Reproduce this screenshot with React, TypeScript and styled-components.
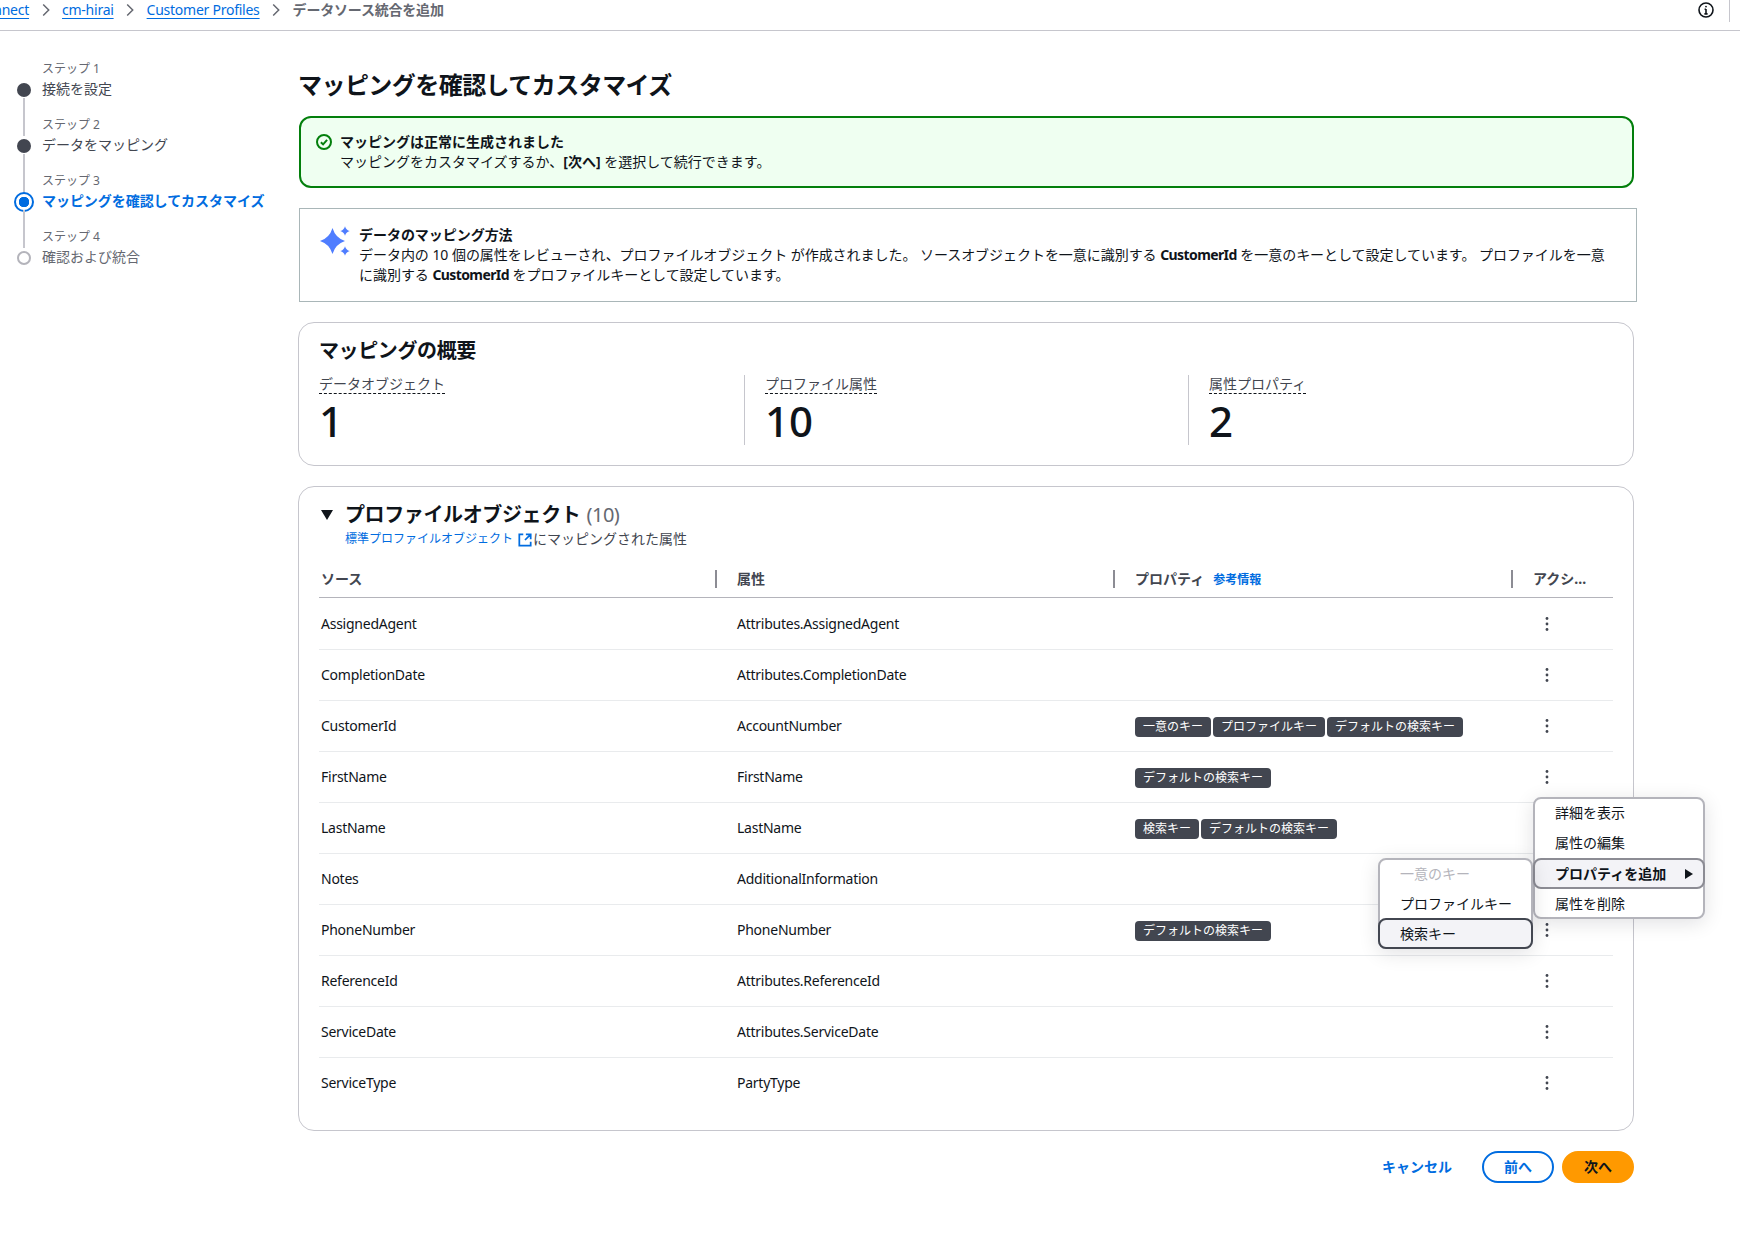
import React from "react";
import styled, { createGlobalStyle } from "styled-components";

const GlobalStyle = createGlobalStyle`
  html, body {
    margin: 0;
    padding: 0;
    background: #ffffff;
    overflow: hidden;
  }
  body {
    font-family: "Noto Sans", "Noto Sans CJK JP", sans-serif;
    font-size: 14px;
    line-height: 20px;
    color: #0f141a;
  }
  * {
    box-sizing: border-box;
  }
  a {
    text-decoration: none;
  }
`;

type Row = {
  source: string;
  attribute: string;
  props: string[];
};

const rows: Row[] = [
  { source: "AssignedAgent", attribute: "Attributes.AssignedAgent", props: [] },
  { source: "CompletionDate", attribute: "Attributes.CompletionDate", props: [] },
  {
    source: "CustomerId",
    attribute: "AccountNumber",
    props: ["一意のキー", "プロファイルキー", "デフォルトの検索キー"],
  },
  { source: "FirstName", attribute: "FirstName", props: ["デフォルトの検索キー"] },
  { source: "LastName", attribute: "LastName", props: ["検索キー", "デフォルトの検索キー"] },
  { source: "Notes", attribute: "AdditionalInformation", props: [] },
  { source: "PhoneNumber", attribute: "PhoneNumber", props: ["デフォルトの検索キー"] },
  { source: "ReferenceId", attribute: "Attributes.ReferenceId", props: [] },
  { source: "ServiceDate", attribute: "Attributes.ServiceDate", props: [] },
  { source: "ServiceType", attribute: "PartyType", props: [] },
];

type StepState = "done" | "active" | "pending";

const steps: { label: string; title: string; state: StepState }[] = [
  { label: "ステップ 1", title: "接続を設定", state: "done" },
  { label: "ステップ 2", title: "データをマッピング", state: "done" },
  { label: "ステップ 3", title: "マッピングを確認してカスタマイズ", state: "active" },
  { label: "ステップ 4", title: "確認および統合", state: "pending" },
];

const stats = [
  { label: "データオブジェクト", value: "1" },
  { label: "プロファイル属性", value: "10" },
  { label: "属性プロパティ", value: "2" },
];

function Kebab() {
  return (
    <svg width="16" height="16" viewBox="0 0 16 16" fill="#424650">
      <circle cx="8" cy="2.5" r="1.4" />
      <circle cx="8" cy="8" r="1.4" />
      <circle cx="8" cy="13.5" r="1.4" />
    </svg>
  );
}

function Chevron() {
  return (
    <svg width="8" height="14" viewBox="0 0 8 14" fill="none" stroke="#656871" strokeWidth="1.5">
      <path d="M1.2 1.5 6.7 7l-5.5 5.5" />
    </svg>
  );
}

function App() {
  return (
    <>
      <GlobalStyle />
      <TopBar>
        <Breadcrumbs>
          <FirstCrumb href="#">Connect</FirstCrumb>
          <Chevron />
          <Crumb href="#">cm-hirai</Crumb>
          <Chevron />
          <Crumb href="#">Customer Profiles</Crumb>
          <Chevron />
          <CurrentCrumb>データソース統合を追加</CurrentCrumb>
        </Breadcrumbs>
        <TopTools>
          <svg width="16" height="16" viewBox="0 0 16 16" fill="none" stroke="#0f141a" strokeWidth="1.6">
            <circle cx="8" cy="8" r="7" />
            <path d="M8 7v5M6.6 7.2H8M6.4 11.9h3.2" />
            <circle cx="8" cy="4.6" r="0.9" fill="#0f141a" stroke="none" />
          </svg>
          <ToolDivider />
        </TopTools>
      </TopBar>
      <Page>
        <Sidebar>
          {steps.map((step, i) => (
            <React.Fragment key={step.label}>
              <StepLabelRow>
                <ConnectorCell>{i > 0 && <Connector />}</ConnectorCell>
                <StepLabel>{step.label}</StepLabel>
              </StepLabelRow>
              <StepTitleRow>
                <MarkerCell>
                  <Marker $state={step.state} />
                </MarkerCell>
                <StepTitle $state={step.state}>{step.title}</StepTitle>
              </StepTitleRow>
            </React.Fragment>
          ))}
        </Sidebar>
        <Main>
          <PageTitle>マッピングを確認してカスタマイズ</PageTitle>
          <SuccessAlert>
            <AlertIcon width="16" height="16" viewBox="0 0 16 16" fill="none" stroke="#037f0c" strokeWidth="2">
              <circle cx="8" cy="8" r="7" />
              <path d="m4.9 8.2 2.2 2.2 4-4.6" />
            </AlertIcon>
            <div>
              <strong>マッピングは正常に生成されました</strong>
              <div>
                マッピングをカスタマイズするか、<strong>[次へ]</strong> を選択して続行できます。
              </div>
            </div>
          </SuccessAlert>
          <InfoBox>
            <svg width="30" height="32" viewBox="0 0 30 32" fill="#4f7dff">
              <path d="M12.5 3Q15.5 13 25 16 15.5 19 12.5 29 9.5 19 0 16 9.5 13 12.5 3Z" />
              <path d="M25 1.2Q26 5 29.7 6 26 7 25 10.8 24 7 20.3 6 24 5 25 1.2Z" />
              <path d="M25 21.2Q26 25 29.7 26 26 27 25 30.8 24 27 20.3 26 24 25 25 21.2Z" />
            </svg>
            <InfoText>
              <strong>データのマッピング方法</strong>
              <div>
                データ内の 10 個の属性をレビューされ、プロファイルオブジェクト が作成されました。
                ソースオブジェクトを一意に識別する <KeyName>CustomerId</KeyName> を一意のキーとして設定しています。
                プロファイルを一意<br />に識別する <KeyName>CustomerId</KeyName> をプロファイルキーとして設定しています。
              </div>
            </InfoText>
          </InfoBox>
          <SummaryCard>
            <CardHeading>マッピングの概要</CardHeading>
            <StatGrid>
              {stats.map((stat) => (
                <StatCol key={stat.label}>
                  <StatLabel>{stat.label}</StatLabel>
                  <StatValue>{stat.value}</StatValue>
                </StatCol>
              ))}
            </StatGrid>
          </SummaryCard>
          <TableCard>
            <TableTitle>
              <Caret width="12" height="12" viewBox="0 0 12 12" fill="#0f141a">
                <path d="M0 1h12L6 11Z" />
              </Caret>
              <CardHeading>プロファイルオブジェクト</CardHeading>
              <Count>(10)</Count>
            </TableTitle>
            <TableSub>
              <BlueLink href="#">標準プロファイルオブジェクト</BlueLink>
              <ExternalIcon width="14" height="14" viewBox="0 0 16 16" fill="none" stroke="#006ce0" strokeWidth="2">
                <path d="M6 1.5H1.5v13h13V10M9 1.5h5.5V7M14.5 1.5 8 8" />
              </ExternalIcon>
              にマッピングされた属性
            </TableSub>
            <HeaderRow>
              <HeaderCell>
                <span>ソース</span>
                <HeaderDivider />
              </HeaderCell>
              <HeaderCell>
                <span>属性</span>
                <HeaderDivider />
              </HeaderCell>
              <HeaderCell>
                <span>
                  プロパティ<InfoLink href="#">参考情報</InfoLink>
                </span>
                <HeaderDivider />
              </HeaderCell>
              <HeaderCell>
                <span>アクシ...</span>
              </HeaderCell>
            </HeaderRow>
            <TableBody>
              {rows.map((row) => (
                <DataRow key={row.source}>
                  <DataCell>{row.source}</DataCell>
                  <DataCell>{row.attribute}</DataCell>
                  <DataCell>
                    <BadgeList>
                      {row.props.map((p) => (
                        <Badge key={p}>{p}</Badge>
                      ))}
                    </BadgeList>
                  </DataCell>
                  <ActionCell>
                    <Kebab />
                  </ActionCell>
                </DataRow>
              ))}
            </TableBody>
            <ActionMenu>
              <MenuItem>詳細を表示</MenuItem>
              <MenuItem>属性の編集</MenuItem>
              <MenuItem $expanded>
                プロパティを追加
                <svg width="8" height="10" viewBox="0 0 8 10" fill="#0f141a">
                  <path d="M0 0v10l8-5Z" />
                </svg>
              </MenuItem>
              <MenuItem>属性を削除</MenuItem>
            </ActionMenu>
            <SubMenu>
              <MenuItem $disabled>一意のキー</MenuItem>
              <MenuItem>プロファイルキー</MenuItem>
              <MenuItem $focused>検索キー</MenuItem>
            </SubMenu>
          </TableCard>
          <Footer>
            <CancelLink href="#">キャンセル</CancelLink>
            <PrevButton>前へ</PrevButton>
            <NextButton>次へ</NextButton>
          </Footer>
        </Main>
      </Page>
    </>
  );
}

export default App;

const TopBar = styled.header`
  height: 31px;
  border-bottom: 1px solid #c6c6cd;
  display: flex;
  justify-content: space-between;
  align-items: flex-start;
  overflow: hidden;
`;
const Breadcrumbs = styled.nav`
  display: flex;
  align-items: center;
  height: 20px;
  gap: 12.5px;
`;
const Crumb = styled.a`
  color: #006ce0;
  letter-spacing: -0.25px;
  text-decoration: underline;
  text-underline-offset: 3px;
`;
const FirstCrumb = styled(Crumb)`
  margin-left: -23.5px;
`;
const CurrentCrumb = styled.span`
  color: #656871;
  font-weight: 700;
  letter-spacing: -0.2px;
`;
const TopTools = styled.div`
  display: flex;
  align-items: flex-start;
  gap: 15px;
  padding-right: 10px;
  padding-top: 2px;
`;
const ToolDivider = styled.div`
  width: 1px;
  height: 22px;
  margin-top: -2px;
  background: #c6c6cd;
`;
const Page = styled.div`
  display: flex;
`;
const Sidebar = styled.aside`
  width: 299px;
  padding: 11px 0 0 15px;
  flex-shrink: 0;
`;
const StepLabelRow = styled.div`
  display: grid;
  grid-template-columns: 18px 1fr;
  column-gap: 9px;
  height: 38px;
`;
const ConnectorCell = styled.div`
  display: flex;
  justify-content: center;
`;
const Connector = styled.div`
  width: 2px;
  height: 100%;
  background: #c6c6cd;
`;
const StepLabel = styled.div`
  padding-top: 17px;
  font-size: 12px;
  color: #656871;
`;
const StepTitleRow = styled.div`
  display: grid;
  grid-template-columns: 18px 1fr;
  column-gap: 9px;
  height: 18px;
  align-items: center;
`;
const MarkerCell = styled.div`
  display: flex;
  justify-content: center;
  align-items: center;
  height: 18px;
`;
const Marker = styled.span<{ $state: StepState }>`
  flex-shrink: 0;
  border-radius: 50%;
  width: ${(p) => (p.$state === "active" ? "20px" : "14px")};
  height: ${(p) => (p.$state === "active" ? "20px" : "14px")};
  background: ${(p) =>
    p.$state === "done"
      ? "#424650"
      : p.$state === "active"
        ? "radial-gradient(circle, #006ce0 0 5px, #ffffff 5.5px)"
        : "#ffffff"};
  border: ${(p) =>
    p.$state === "pending" ? "2px solid #b4b4bb" : p.$state === "active" ? "2px solid #006ce0" : "none"};
`;
const StepTitle = styled.div<{ $state: StepState }>`
  margin-top: -1px;
  white-space: nowrap;
  letter-spacing: ${(p) => (p.$state === "active" ? "-0.05px" : "0")};
  color: ${(p) =>
    p.$state === "active" ? "#006ce0" : p.$state === "done" ? "#424650" : "#656871"};
  font-weight: ${(p) => (p.$state === "active" ? 700 : 400)};
`;
const Main = styled.main`
  width: 1335px;
  padding-top: 38px;
`;
const PageTitle = styled.h1`
  margin: 0 0 15px -1px;
  font-size: 24px;
  line-height: 32px;
  font-weight: 700;
  letter-spacing: -0.55px;
`;
const SuccessAlert = styled.div`
  height: 72px;
  display: flex;
  gap: 8px;
  padding: 14px 15px;
  background: #effff1;
  border: 2px solid #037f0c;
  border-radius: 12px;
`;
const AlertIcon = styled.svg`
  margin-top: 2px;
  flex-shrink: 0;
`;
const InfoBox = styled.div`
  width: 1338px;
  height: 94px;
  margin-top: 20px;
  display: flex;
  gap: 9px;
  padding: 16px 10px 16px 20px;
  border: 1px solid #a9b6b8;
`;
const InfoText = styled.div`
  flex: 1;
  letter-spacing: -0.04px;
`;
const KeyName = styled.strong`
  letter-spacing: -0.6px;
`;
const SummaryCard = styled.section`
  position: relative;
  width: 1336px;
  height: 144px;
  margin-top: 20px;
  margin-left: -1px;
  padding: 14px 0 0 20px;
  border: 1px solid #c6c6cd;
  border-radius: 16px;
`;
const CardHeading = styled.h2`
  margin: 0;
  font-size: 20px;
  line-height: 28px;
  font-weight: 700;
  letter-spacing: -0.38px;
`;
const StatGrid = styled.div`
  display: grid;
  grid-template-columns: 425px 444px 1fr;
  margin-top: 10px;
`;
const StatCol = styled.div`
  height: 70px;
  display: flex;
  flex-direction: column;
  align-items: flex-start;
  & + & {
    padding-left: 20px;
    border-left: 1px solid #c6c6cd;
  }
`;
const StatLabel = styled.span`
  color: #424650;
  line-height: 18px;
  height: 19px;
  border-bottom: 1px dashed #0f141a;
`;
const StatValue = styled.div`
  font-size: 42px;
  font-weight: 500;
  line-height: 50px;
  margin-top: 2px;
`;
const TableCard = styled.section`
  position: relative;
  width: 1336px;
  height: 645px;
  margin-top: 20px;
  margin-left: -1px;
  padding: 14px 20px 0;
  border: 1px solid #c6c6cd;
  border-radius: 16px;
`;
const TableTitle = styled.div`
  display: flex;
  align-items: center;
  height: 28px;
`;
const Caret = styled.svg`
  margin: 0 12px 0 2px;
`;
const Count = styled.span`
  margin-left: 6px;
  font-size: 20px;
  letter-spacing: -0.5px;
  color: #656871;
`;
const TableSub = styled.div`
  padding-left: 26px;
  height: 20px;
  line-height: 20px;
  color: #424650;
  display: flex;
  align-items: center;
`;
const BlueLink = styled.a`
  color: #006ce0;
  font-size: 12px;
`;
const ExternalIcon = styled.svg`
  margin: 2px 1px 0 5px;
`;
const HeaderRow = styled.div`
  display: grid;
  grid-template-columns: 416px 398px 398px 1fr;
  height: 37px;
  margin-top: 12px;
  margin-bottom: 1px;
  align-items: center;
  border-bottom: 1px solid #b4b4bb;
`;
const HeaderCell = styled.div`
  display: flex;
  justify-content: space-between;
  align-items: center;
  padding: 0 18px 0 2px;
  color: #424650;
  font-weight: 700;
`;
const HeaderDivider = styled.span`
  width: 2px;
  height: 18px;
  background: #8c8c94;
`;
const InfoLink = styled.a`
  margin-left: 9px;
  font-size: 12px;
  font-weight: 700;
  color: #006ce0;
`;
const TableBody = styled.div`
  display: flex;
  flex-direction: column;
`;
const DataRow = styled.div`
  display: grid;
  grid-template-columns: 416px 398px 398px 1fr;
  height: 51px;
  align-items: center;
  border-bottom: 1px solid #e9ebed;
  &:last-child {
    border-bottom-color: transparent;
  }
`;
const DataCell = styled.div`
  padding-left: 2px;
  letter-spacing: -0.25px;
  color: #0f141a;
`;
const ActionCell = styled.div`
  display: flex;
  padding-left: 8px;
`;
const BadgeList = styled.div`
  display: flex;
  gap: 2px;
  margin-top: 2px;
  letter-spacing: 0;
`;
const Badge = styled.span`
  height: 20px;
  line-height: 20px;
  padding: 0 8px;
  border-radius: 4px;
  background: #424650;
  color: #ffffff;
  font-size: 12px;
`;
const ActionMenu = styled.div`
  position: absolute;
  left: 1234px;
  top: 310px;
  width: 172px;
  height: 122px;
  background: #ffffff;
  border: 2px solid #b4b4bb;
  border-radius: 8px;
  box-shadow: 0 4px 20px rgba(0, 7, 22, 0.12);
`;
const SubMenu = styled(ActionMenu)`
  left: 1079px;
  top: 371px;
  width: 155px;
  height: 91px;
`;
const MenuItem = styled.div<{ $expanded?: boolean; $disabled?: boolean; $focused?: boolean }>`
  display: flex;
  align-items: center;
  justify-content: space-between;
  height: 29px;
  padding: 0 14px 0 20px;
  white-space: nowrap;
  color: ${(p) => (p.$disabled ? "#b4b4bb" : "#0f141a")};
  &:first-child {
    margin-top: -1px;
    margin-bottom: 1px;
  }
  ${(p) =>
    p.$expanded &&
    `
    margin: 1px -2px 0;
    padding: 0 10px 0 20px;
    height: 31px;
    font-weight: 700;
    background: #f3f3f7;
    border: 2px solid #8c8c94;
    border-radius: 8px;
  `}
  ${(p) =>
    p.$focused &&
    `
    margin: 0 -2px -2px;
    padding: 0 16px 0 20px;
    height: 31px;
    background: #f3f3f7;
    border: 2px solid #424650;
    border-radius: 8px;
  `}
`;
const Footer = styled.div`
  display: flex;
  justify-content: flex-end;
  align-items: center;
  margin-top: 20px;
  gap: 8px;
`;
const CancelLink = styled.a`
  margin-right: 22px;
  color: #006ce0;
  font-weight: 700;
`;
const PrevButton = styled.button`
  width: 72px;
  height: 32px;
  padding: 0;
  font: inherit;
  font-weight: 700;
  color: #006ce0;
  background: #ffffff;
  border: 2px solid #006ce0;
  border-radius: 20px;
`;
const NextButton = styled(PrevButton)`
  color: #0f141a;
  background: #ff9900;
  border-color: #ff9900;
`;
